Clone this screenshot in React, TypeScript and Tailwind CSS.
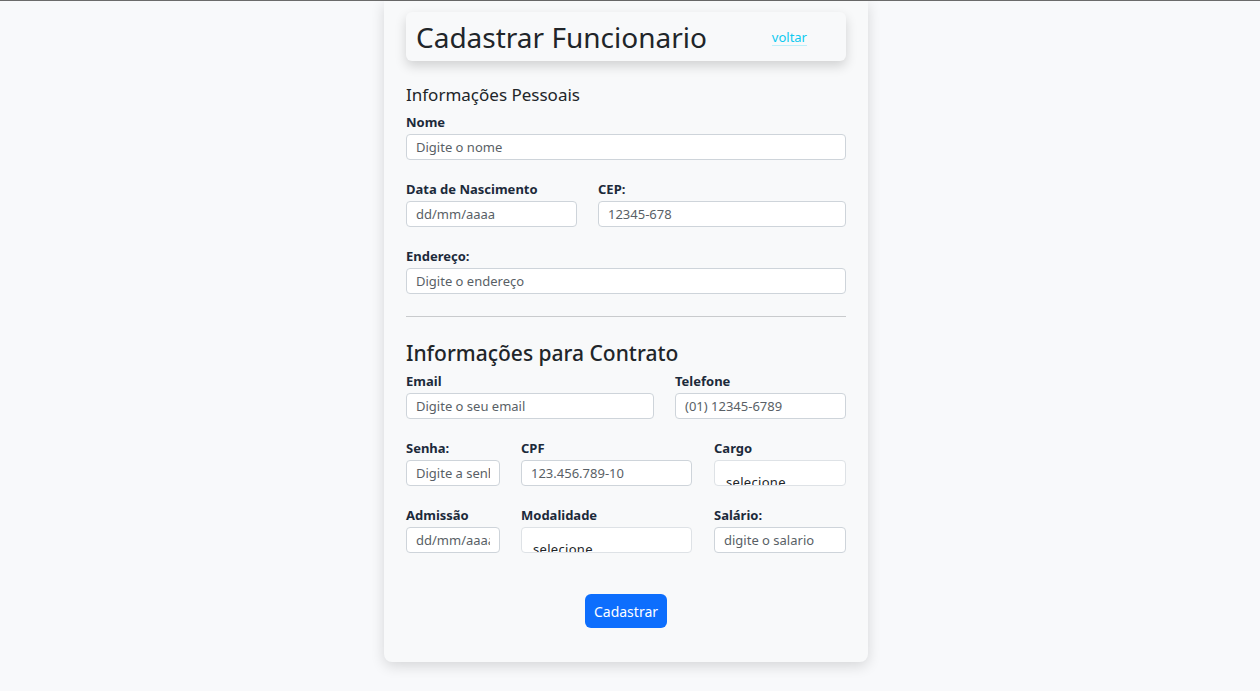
import React from "react";

const font = { fontFamily: '"Noto Sans", "Segoe UI", sans-serif' };

function Field({
  label,
  placeholder,
  width,
}: {
  label: string;
  placeholder: string;
  width: string;
}) {
  return (
    <div className={`flex flex-col ${width}`}>
      <label className="text-[13px] font-bold leading-[17px] text-[#1c2a3a] mb-[3px]">{label}</label>
      <div className="h-[26px] rounded-[4px] border border-[#ced4da] bg-white pl-[9px] pr-[9px] text-[13px] leading-[24px] text-[#595f66]">
        <div className="overflow-hidden whitespace-nowrap">{placeholder}</div>
      </div>
    </div>
  );
}

function SelectField({ label, width }: { label: string; width: string }) {
  return (
    <div className={`flex flex-col ${width}`}>
      <label className="text-[13px] font-bold leading-[17px] text-[#1c2a3a] mb-[3px]">{label}</label>
      <div className="h-[26px] rounded-[4px] border border-[#dee2e6] bg-white pl-[11px] pt-[12px] text-[13px] leading-[18px] tracking-[0.3px] text-[#212529] overflow-hidden whitespace-nowrap">
        selecione
      </div>
    </div>
  );
}

export default function App() {
  return (
    <div className="min-h-[691px] bg-[#f8f9fb] border-t border-[#6b6b6b] flex justify-center pr-[8px]" style={font}>
      <div className="w-[484px] self-start rounded-b-lg bg-[#f8f9fa] px-[22px] pt-[11px] pb-[34px] shadow-[0_4px_14px_rgba(0,0,0,0.14)]">
        {/* Header */}
        <div className="flex h-[49px] items-center justify-between rounded-md bg-[#f8f9fa] pl-[10px] pr-[39px] shadow-[0_5px_12px_rgba(0,0,0,0.16)]">
          <h1 className="text-[28px] leading-none text-[#212529]">Cadastrar Funcionario</h1>
          <a href="#" className="text-[13px] text-[#0dcaf0] border-b border-[#bdeffa] leading-[16px] mt-[2px]">
            voltar
          </a>
        </div>

        <h2 className="mt-[22px] text-[17px] leading-[24px] text-[#212529]">Informações Pessoais</h2>
        <div className="mt-[7px] flex flex-col gap-[21px]">
          <Field label="Nome" placeholder="Digite o nome" width="w-full" />
          <div className="flex gap-[21px]">
            <Field label="Data de Nascimento" placeholder="dd/mm/aaaa" width="w-[171px]" />
            <Field label="CEP:" placeholder="12345-678" width="w-[248px]" />
          </div>
          <Field label="Endereço:" placeholder="Digite o endereço" width="w-full" />
        </div>

        <hr className="mt-[22px] border-t border-[#c9cbcd]" />

        <h2 className="mt-[22px] text-[21px] font-medium leading-[28px] text-[#212529]">Informações para Contrato</h2>
        <div className="mt-[6px] flex flex-col gap-[21px]">
          <div className="flex gap-[21px]">
            <Field label="Email" placeholder="Digite o seu email" width="w-[248px]" />
            <Field label="Telefone" placeholder="(01) 12345-6789" width="w-[171px]" />
          </div>
          <div className="flex gap-[21px]">
            <Field label="Senha:" placeholder="Digite a senha" width="w-[94px]" />
            <Field label="CPF" placeholder="123.456.789-10" width="w-[171px]" />
            <div className="ml-[1px]">
              <SelectField label="Cargo" width="w-[132px]" />
            </div>
          </div>
          <div className="flex gap-[21px]">
            <Field label="Admissão" placeholder="dd/mm/aaaa" width="w-[94px]" />
            <SelectField label="Modalidade" width="w-[171px]" />
            <div className="ml-[1px]">
              <Field label="Salário:" placeholder="digite o salario" width="w-[132px]" />
            </div>
          </div>
        </div>

        <div className="mt-[41px] flex justify-center">
          <button className="h-[34px] w-[82px] rounded-md bg-[#0d6efd] text-[14px] text-white">Cadastrar</button>
        </div>
      </div>
    </div>
  );
}
